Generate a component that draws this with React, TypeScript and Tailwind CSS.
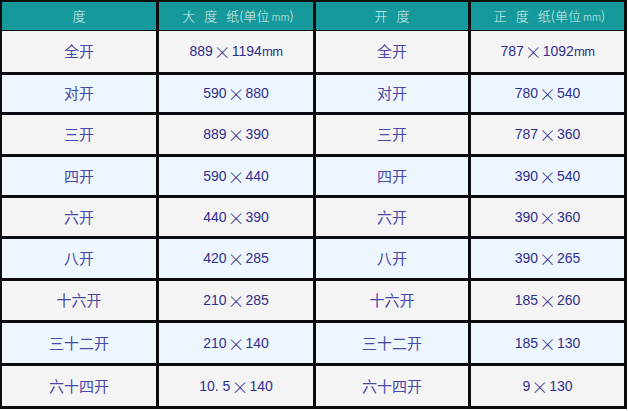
const rows: [string, string, string, string][] = [
  ["全开", "889×1194mm", "全开", "787×1092mm"],
  ["对开", "590×880", "对开", "780×540"],
  ["三开", "889×390", "三开", "787×360"],
  ["四开", "590×440", "四开", "390×540"],
  ["六开", "440×390", "六开", "390×360"],
  ["八开", "420×285", "八开", "390×265"],
  ["十六开", "210×285", "十六开", "185×260"],
  ["三十二开", "210×140", "三十二开", "185×130"],
  ["六十四开", "10.5×140", "六十四开", "9×130"],
];

const heights = ["h-[41px]", "h-[37px]", "h-[39px]", "h-[38px]", "h-[38px]", "h-[39px]", "h-[39px]", "h-[40px]", "h-[40px]"];

const cols = "grid grid-cols-[154px_154px_152px_153px] gap-x-[3px]";
const font = { fontFamily: '"Noto Sans CJK SC", "Liberation Sans", sans-serif' };

function Size({ text }: { text: string }) {
  const [a, b] = text.split("×");
  return (
    <span className="font-['Liberation_Sans'] flex items-center">
      {a.replace(".", ". ")}
      <span className="inline-flex w-[19px] justify-center font-['Noto_Sans_CJK_SC'] text-[17px] font-light leading-none">
        ×
      </span>
      {b.replace("mm", "")}
      {b.endsWith("mm") && <span className="text-[13px] tracking-[-0.5px]">mm</span>}
    </span>
  );
}

export default function App() {
  return (
    <div className="w-[628px] h-[411px] bg-white" style={font}>
      <div className="w-[627px] bg-[#0b0b10] pl-[2px] pr-[3px] pt-[2px] pb-[3px] flex flex-col">
        <div className={`${cols} h-[28px] text-[13px] font-light text-[#dcf0f0]`}>
          <div className="bg-[#15999a] flex items-center justify-center">度</div>
          <div className="bg-[#15999a] flex items-center justify-center gap-[9px] pl-[4px]">
            <span>大</span>
            <span>度</span>
            <span>
              纸(单位<span className="text-[10px] ml-[2px]">mm</span>)
            </span>
          </div>
          <div className="bg-[#15999a] flex items-center justify-center gap-[9px]">
            <span>开</span>
            <span>度</span>
          </div>
          <div className="bg-[#15999a] flex items-center justify-center gap-[9px] pl-[4px]">
            <span>正</span>
            <span>度</span>
            <span>
              纸(单位<span className="text-[10px] ml-[2px]">mm</span>)
            </span>
          </div>
        </div>
        <div className="flex flex-col gap-y-[3px] mt-[1px]">
          {rows.map((r, i) => {
            const bg = i % 2 === 0 ? "bg-[#f4f4f4]" : "bg-[#eef6fd]";
            return (
              <div key={i} className={`${cols} ${heights[i]}`}>
                <div className={`${bg} flex items-center justify-center text-[15px] text-[#4848a6]`}>{r[0]}</div>
                <div className={`${bg} flex items-center justify-center text-[14px] text-[#2f2f8e]`}>
                  <Size text={r[1]} />
                </div>
                <div className={`${bg} flex items-center justify-center text-[15px] text-[#4848a6]`}>{r[2]}</div>
                <div className={`${bg} flex items-center justify-center text-[14px] text-[#2f2f8e]`}>
                  <Size text={r[3]} />
                </div>
              </div>
            );
          })}
        </div>
      </div>
    </div>
  );
}
